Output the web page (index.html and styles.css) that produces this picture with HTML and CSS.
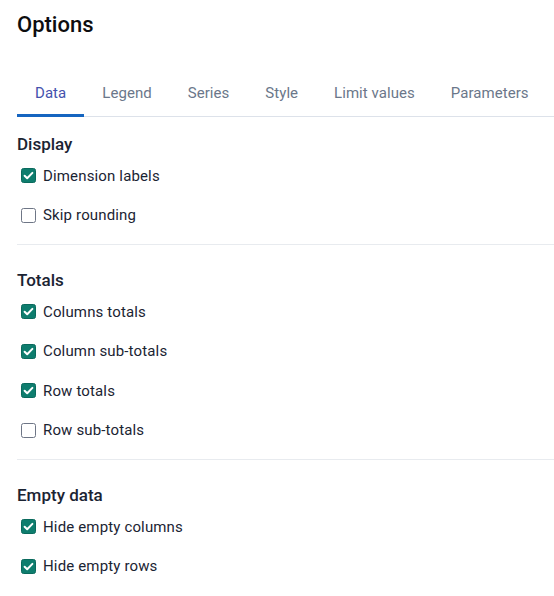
FILE: index.html
```html
<!DOCTYPE html>
<html lang="en">
<head>
<meta charset="utf-8">
<title>Options</title>
<link rel="stylesheet" href="styles.css">
</head>
<body>
<div class="panel">
  <h1 class="title">Options</h1>
  <nav class="tabs">
    <div class="tab active">Data</div>
    <div class="tab">Legend</div>
    <div class="tab">Series</div>
    <div class="tab">Style</div>
    <div class="tab">Limit values</div>
    <div class="tab">Parameters</div>
  </nav>

  <section class="section first">
    <h2 class="section-title">Display</h2>
    <label class="row"><span class="box checked"><svg viewBox="0 0 15 15"><path d="M3.6 7.8 L6.2 10.3 L11.4 4.9"/></svg></span><span class="label">Dimension labels</span></label>
    <label class="row"><span class="box"></span><span class="label">Skip rounding</span></label>
  </section>

  <section class="section">
    <h2 class="section-title">Totals</h2>
    <label class="row"><span class="box checked"><svg viewBox="0 0 15 15"><path d="M3.6 7.8 L6.2 10.3 L11.4 4.9"/></svg></span><span class="label">Columns totals</span></label>
    <label class="row"><span class="box checked"><svg viewBox="0 0 15 15"><path d="M3.6 7.8 L6.2 10.3 L11.4 4.9"/></svg></span><span class="label">Column sub-totals</span></label>
    <label class="row"><span class="box checked"><svg viewBox="0 0 15 15"><path d="M3.6 7.8 L6.2 10.3 L11.4 4.9"/></svg></span><span class="label">Row totals</span></label>
    <label class="row"><span class="box"></span><span class="label">Row sub-totals</span></label>
  </section>

  <section class="section last">
    <h2 class="section-title">Empty data</h2>
    <label class="row"><span class="box checked"><svg viewBox="0 0 15 15"><path d="M3.6 7.8 L6.2 10.3 L11.4 4.9"/></svg></span><span class="label">Hide empty columns</span></label>
    <label class="row"><span class="box checked"><svg viewBox="0 0 15 15"><path d="M3.6 7.8 L6.2 10.3 L11.4 4.9"/></svg></span><span class="label">Hide empty rows</span></label>
  </section>
</div>
</body>
</html>
```

FILE: styles.css
```css
html, body {
  margin: 0;
  padding: 0;
  background: #ffffff;
}

body {
  font-family: Roboto, "Liberation Sans", Arial, sans-serif;
  color: #1b2433;
}

.panel {
  padding: 12px 0 0 17px;
}

.title {
  margin: 0 0 32px 0;
  font-size: 22px;
  line-height: 26px;
  font-weight: 500;
  color: #0d0d0f;
}

.tabs {
  display: flex;
  border-bottom: 1px solid #dde2ea;
}

.tab {
  position: relative;
  padding: 13px 18px 13px;
  font-size: 15px;
  line-height: 20px;
  letter-spacing: 0.05px;
  color: #6b778a;
  white-space: nowrap;
}

.tab.active {
  color: #4452ad;
}

.tab.active::after {
  content: "";
  position: absolute;
  left: 0;
  right: 0;
  bottom: -1px;
  height: 3px;
  background: #1565c0;
}

.section {
  padding: 23px 0 9px 0;
  border-bottom: 1px solid #e8ebef;
}

.section.first {
  padding-top: 15px;
}

.section.last {
  border-bottom: none;
}

.section-title {
  margin: 0;
  font-size: 17px;
  line-height: 24px;
  font-weight: 500;
  color: #1b2433;
}

.row {
  display: flex;
  align-items: center;
  height: 39.5px;
  gap: 6px;
  padding-left: 4px;
}

.box {
  box-sizing: border-box;
  width: 15px;
  height: 15px;
  border: 1.5px solid #6e7686;
  border-radius: 2.5px;
  display: flex;
  align-items: center;
  justify-content: center;
  flex: none;
}

.box.checked {
  background: #0e7d6e;
  border-color: #0a6a5d;
}

.box svg {
  width: 15px;
  height: 15px;
  flex: none;
}

.box svg path {
  fill: none;
  stroke: #ffffff;
  stroke-width: 2;
  stroke-linecap: round;
  stroke-linejoin: round;
}

.label {
  margin-left: 1px;
  font-size: 15px;
  line-height: 20px;
  letter-spacing: 0.15px;
  color: #1b2433;
}
```
